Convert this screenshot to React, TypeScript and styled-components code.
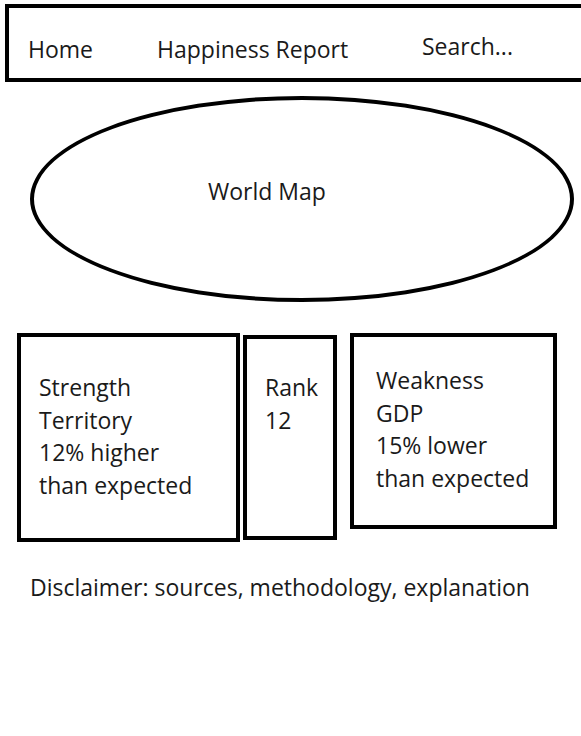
import styled, { createGlobalStyle } from 'styled-components';

const GlobalStyle = createGlobalStyle`
  html, body {
    margin: 0;
    padding: 0;
    background: #ffffff;
  }
  body {
    font-family: "Open Sans", "Noto Sans", sans-serif;
    color: #1a1a1a;
  }
`;

const Page = styled.div`
  width: 581px;
  height: 736px;
  overflow: hidden;
  font-size: 23px;
  line-height: 32px;
`;

const NavBar = styled.nav`
  margin: 4px 0 0 5px;
  height: 70px;
  border: 4px solid #000;
  border-right: none;
  display: grid;
  grid-template-columns: 129px 265px auto;
  align-items: center;
  padding: 12px 0 0 19px;
  box-sizing: border-box;
  height: 78px;
`;

const NavItem = styled.span<{ $lift?: number }>`
  white-space: nowrap;
  margin-bottom: ${(p) => (p.$lift ?? 0) * 2}px;
`;

const MapOval = styled.div`
  margin: 14px 0 0 30px;
  width: 544px;
  height: 206px;
  border: 4px solid #000;
  border-radius: 50%;
  box-sizing: border-box;
  display: flex;
  align-items: flex-start;
  padding: 75px 0 0 174px;
`;

const StatsRow = styled.section`
  display: flex;
  align-items: flex-start;
  margin: 31px 0 0 17px;
`;

const StatCard = styled.div<{ $w: number; $h: number; $top?: number; $gap?: number; $padTop: number; $padLeft: number }>`
  box-sizing: border-box;
  width: ${(p) => p.$w}px;
  height: ${(p) => p.$h}px;
  margin-top: ${(p) => p.$top ?? 0}px;
  margin-left: ${(p) => p.$gap ?? 0}px;
  border: 4px solid #000;
  padding: ${(p) => p.$padTop}px 0 0 ${(p) => p.$padLeft}px;
  line-height: 32.5px;
`;

const Line = styled.div`
  white-space: nowrap;
`;

const Disclaimer = styled.p`
  margin: 29px 0 0 30px;
`;

export default function App() {
  return (
    <Page>
      <GlobalStyle />
      <NavBar>
        <NavItem>Home</NavItem>
        <NavItem>Happiness Report</NavItem>
        <NavItem $lift={3}>Search...</NavItem>
      </NavBar>
      <MapOval>World Map</MapOval>
      <StatsRow>
        <StatCard $w={223} $h={209} $padTop={34} $padLeft={18}>
          <Line>Strength</Line>
          <Line>Territory</Line>
          <Line>12% higher</Line>
          <Line>than expected</Line>
        </StatCard>
        <StatCard $w={94} $h={205} $top={2} $gap={3} $padTop={32} $padLeft={18}>
          <Line>Rank</Line>
          <Line>12</Line>
        </StatCard>
        <StatCard $w={207} $h={196} $gap={13} $padTop={27} $padLeft={22}>
          <Line>Weakness</Line>
          <Line>GDP</Line>
          <Line>15% lower</Line>
          <Line>than expected</Line>
        </StatCard>
      </StatsRow>
      <Disclaimer>Disclaimer: sources, methodology, explanation</Disclaimer>
    </Page>
  );
}
